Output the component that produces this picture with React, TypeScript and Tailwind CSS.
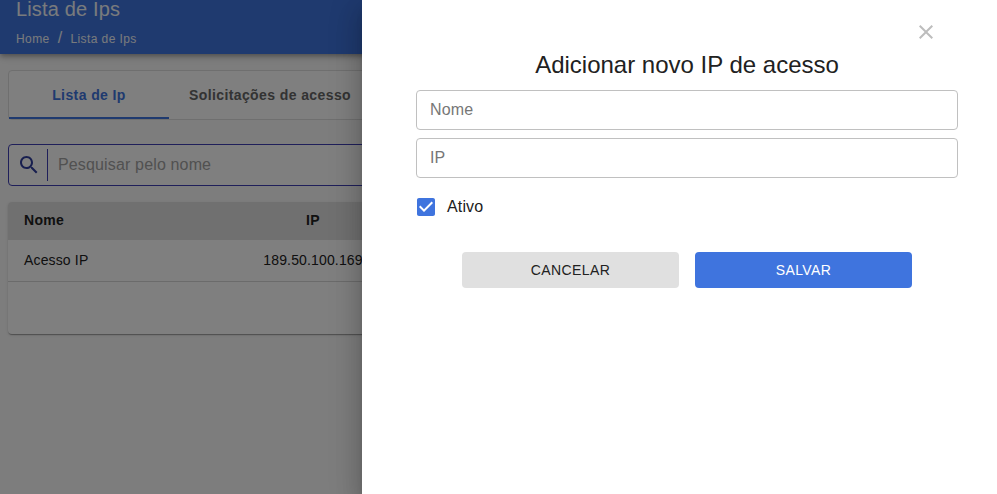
function Header() {
  return (
    <header className="h-[54px] shrink-0 bg-[#3f74de] px-4 text-[#f2f6fa] shadow-[0_2px_4px_-1px_rgba(0,0,0,0.2),0_4px_5px_rgba(0,0,0,0.14),0_1px_10px_rgba(0,0,0,0.12)]">
      <h1 className="h-[18px] text-[20px] leading-[18px] tracking-[0.15px]">Lista de Ips</h1>
      <nav className="mt-[11px] flex h-5 items-center text-[12px] leading-5 tracking-[0.4px]">
        <span>Home</span>
        <span className="mx-2 -mt-0.5 text-[16px]">/</span>
        <span>Lista de Ips</span>
      </nav>
    </header>
  );
}

function Tabs() {
  return (
    <div className="flex h-[50px] rounded border border-[#dedede] bg-white text-[14px] font-bold tracking-[0.4px]">
      <div className="flex w-40 items-center justify-center border-b-2 border-[#3f74de] pt-0.5 text-[#3f74de]">Lista de Ip</div>
      <div className="flex w-[202px] items-center justify-center whitespace-nowrap text-[#666]">Solicitações de acesso</div>
    </div>
  );
}

function Search() {
  return (
    <div className="mt-6 flex h-[42px] items-center rounded border border-[#3f3fb5] bg-white">
      <svg className="ml-2 size-6 shrink-0" viewBox="0 0 24 24" fill="#303f9f">
        <path d="M15.5 14h-.79l-.28-.27C15.41 12.59 16 11.11 16 9.5 16 5.91 13.09 3 9.5 3S3 5.91 3 9.5 5.91 16 9.5 16c1.61 0 3.09-.59 4.23-1.57l.27.28v.79l5 4.99L20.49 19l-4.99-5zm-6 0C7.01 14 5 11.99 5 9.5S7.01 5 9.5 5 14 7.01 14 9.5 11.99 14 9.5 14z" />
      </svg>
      <span className="ml-[6px] h-8 w-px bg-[#3f3fb5]" />
      <span className="ml-[10px] text-[16px] tracking-[0.15px] text-[#a2a2a2]">Pesquisar pelo nome</span>
    </div>
  );
}

function IpTable() {
  return (
    <div className="mt-4 h-[132px] overflow-hidden rounded bg-white text-[14px] text-[#212121] shadow-[0_2px_1px_-1px_rgba(0,0,0,0.2),0_1px_1px_rgba(0,0,0,0.14),0_1px_3px_rgba(0,0,0,0.12)]">
      <div className="flex h-[38px] items-center bg-[#e0e0e0] pb-0.5 font-bold tracking-[0.3px]">
        <span className="w-[210px] pl-4">Nome</span>
        <span className="w-[190px] text-center">IP</span>
      </div>
      <div className="flex h-[42px] items-center border-b border-[#d6d6d6] tracking-[0.15px]">
        <span className="w-[210px] pl-4">Acesso IP</span>
        <span className="w-[190px] text-center">189.50.100.169</span>
      </div>
    </div>
  );
}

function Field({ label }: { label: string }) {
  return (
    <input
      aria-label={label}
      placeholder={label}
      className="block h-10 w-full rounded border border-[#c0c0c0] px-[13px] text-[16px] tracking-[0.15px] outline-none placeholder:text-[#777]"
    />
  );
}

function Drawer() {
  return (
    <aside className="absolute inset-y-0 right-0 w-[635px] bg-white pl-[54px] pr-[39px] text-[#212121] shadow-[0_8px_10px_-5px_rgba(0,0,0,0.2),0_16px_24px_2px_rgba(0,0,0,0.14),0_6px_30px_5px_rgba(0,0,0,0.12)]">
      <div className="flex h-12 justify-end pr-5 pt-5">
        <button aria-label="Fechar" className="size-6">
          <svg viewBox="0 0 24 24" fill="#bdbdbd">
            <path d="M19 6.41 17.59 5 12 10.59 6.41 5 5 6.41 10.59 12 5 17.59 6.41 19 12 13.41 17.59 19 19 17.59 13.41 12z" />
          </svg>
        </button>
      </div>
      <h2 className="h-[42px] text-center text-[24px] leading-[34px]">Adicionar novo IP de acesso</h2>
      <div className="flex flex-col gap-2">
        <Field label="Nome" />
        <Field label="IP" />
      </div>
      <label className="mt-[17px] flex h-6 items-center text-[16px] tracking-[0.15px]">
        <svg className="-ml-0.5 size-6" viewBox="0 0 24 24" fill="#3f74de">
          <path d="M19 3H5c-1.11 0-2 .9-2 2v14c0 1.1.89 2 2 2h14c1.11 0 2-.9 2-2V5c0-1.1-.89-2-2-2zm-9 14l-5-5 1.41-1.41L10 14.17l7.59-7.59L19 8l-9 9z" />
        </svg>
        <span className="ml-[9px]">Ativo</span>
      </label>
      <div className="mt-[33px] flex justify-center gap-4 text-[14px] tracking-[0.4px]">
        <button className="h-9 w-[217px] rounded bg-[#e0e0e0]">CANCELAR</button>
        <button className="h-9 w-[217px] rounded bg-[#3f74de] text-white">SALVAR</button>
      </div>
    </aside>
  );
}

export default function App() {
  return (
    <div className="relative h-[494px] w-full overflow-hidden bg-[#fafafa] font-['Liberation_Sans',Arial,sans-serif]">
      <Header />
      <main className="px-2 pt-4">
        <Tabs />
        <Search />
        <IpTable />
      </main>
      <div className="absolute inset-0 bg-black/50" />
      <Drawer />
    </div>
  );
}
